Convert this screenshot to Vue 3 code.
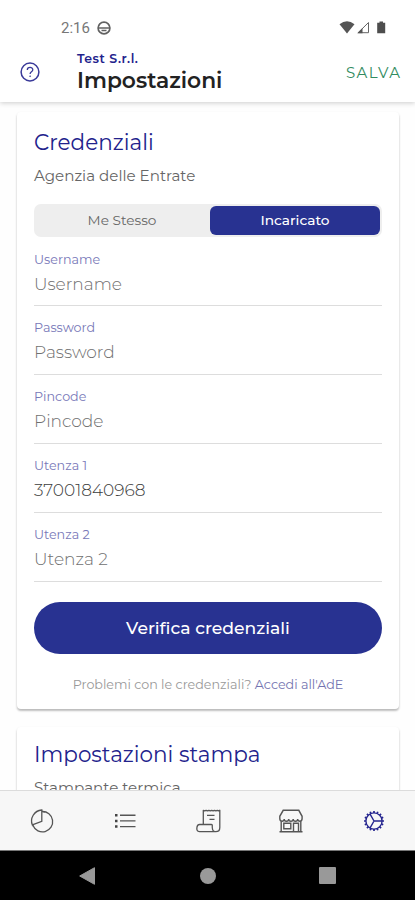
<script setup>
const fields = [
  { label: 'Username', text: 'Username' },
  { label: 'Password', text: 'Password' },
  { label: 'Pincode', text: 'Pincode' },
  { label: 'Utenza 1', text: '37001840968', filled: true },
  { label: 'Utenza 2', text: 'Utenza 2' },
]
// Angles of the teeth around the gear rim
const teeth = Array.from({ length: 16 }, (_, i) => i * 22.5)
</script>

<template>
  <div class="screen">
    <header class="header">
      <div class="status">
        <span class="time">2:16</span>
        <svg class="wheel" width="14" height="14" viewBox="0 0 14 14" fill="none" stroke="#616161" stroke-width="1.7">
          <circle cx="7" cy="7" r="5.9" />
          <path d="M1 7h12M4.500 9.500h5" stroke-width="1.300" />
        </svg>
        <svg class="signals" width="48" height="16" viewBox="0 0 48 16">
          <path d="M.5 4.200Q8 -1.500 15.500 4.200L8 13.500z" fill="#555" />
          <path d="M19.200 12.700L29.500 2.500V12.700z" fill="none" stroke="#666" stroke-width="1" />
          <path d="M18.200 13.200L23.500 8V13.200z" fill="#555" />
          <path d="M40.500 1.400h3.500v1.300h2.200v10.600h-8V2.700h2.300z" fill="#4d4d4d" />
        </svg>
      </div>
      <div class="bar">
        <svg class="help" width="20" height="20" viewBox="0 0 20 20" fill="none" stroke="#3a3a99">
          <circle cx="10" cy="10" r="8.900" stroke-width="1.500" />
          <path d="M7.300 7.900c0-3.400 5.500-3.300 5.500-.2 0 2-2.700 2-2.700 4.200" stroke-width="1.300" />
          <circle cx="10.100" cy="14.200" r=".5" fill="#3a3a99" stroke-width=".6" />
        </svg>
        <div class="titles">
          <div class="company">Test S.r.l.</div>
          <h1>Impostazioni</h1>
        </div>
        <span class="save">SALVA</span>
      </div>
    </header>

    <main class="content">
      <section class="card">
        <h2>Credenziali</h2>
        <p class="sub">Agenzia delle Entrate</p>
        <div class="segment">
          <span class="option">Me Stesso</span>
          <span class="option active">Incaricato</span>
        </div>
        <div v-for="f in fields" :key="f.label" class="field">
          <div class="label">{{ f.label }}</div>
          <div class="value" :class="{ filled: f.filled }">{{ f.text }}</div>
        </div>
        <div class="verify">Verifica credenziali</div>
        <p class="hint">Problemi con le credenziali? <span>Accedi all'AdE</span></p>
      </section>
      <section class="card second">
        <h2>Impostazioni stampa</h2>
        <p class="sub">Stampante termica</p>
      </section>
    </main>

    <nav class="tabs">
      <div class="tab">
        <svg width="26" height="26" viewBox="0 0 26 26" fill="none" stroke="#555" stroke-width="1.300">
          <path d="M13 3.500a10.200 10.200 0 1 1-9 14" />
          <path d="M12.800 2v11.300L3.300 16.800C.8 10.500 5 2.500 12.800 2z" />
          <path d="M13 3.400c1 0 2 .1 3 .4M3.500 16.500l1 2" />
        </svg>
      </div>
      <div class="tab">
        <svg width="26" height="26" viewBox="0 0 26 26" stroke="#555" stroke-width="1.400">
          <path d="M8 7.200h15.500M8 12.900h15.500M8 18.600h15.500" />
          <path d="M3 7.200h2.500M3 12.900h2.500M3 18.600h2.500" stroke-width="2.500" stroke="#444" />
        </svg>
      </div>
      <div class="tab">
        <svg width="26" height="26" viewBox="0 0 26 26" fill="none" stroke="#555" stroke-width="1.300" stroke-linejoin="round">
          <path d="M8.300 16.500V2.300l1.400.6 1.400-.6 1.400.6 1.400-.6 1.400.6 1.400-.6 1.400.6 1.400-.6 1.400.6 1.400-.6 1.300.6 1.200-.6V19.500c0 2.700-1.500 4.200-4 4.200H4.500c-2.500 0-3-2.200-2.500-4.700.3-1.500 1-2.500 2.500-2.500h11.800c1.500 0 .8 1.700 1 3.200.2 2.200 1 3.800 2.700 4" />
          <path d="M12 7.300h7.500M14.500 11.300h5" />
        </svg>
      </div>
      <div class="tab">
        <svg width="26" height="26" viewBox="0 0 26 26" fill="none" stroke="#555" stroke-width="1.400">
          <path d="M5.200 2.300h15.600l3.300 6v2.200c0 3.500-4.400 3.500-4.400.4 0 3.100-4.500 3.100-4.500 0 0 3.100-4.500 3.100-4.500 0 0 3.100-4.500 3.100-4.500 0 0 3.100-4.400 3.100-4.400-.4V8.300z" />
          <path d="M3.200 13v10.200M22.800 13v10.200M1.500 23.800h23M5.800 15.200h7v5.500h-7zM15.500 23.500v-8.300h5v8.300" />
        </svg>
      </div>
      <div class="tab">
        <svg width="26" height="26" viewBox="0 0 26 26" fill="none" stroke="#25258f" stroke-width="1.400">
          <circle cx="13" cy="13" r="8.100" />
          <path d="M13 13h8M13 13L9.100 6.200M13 13L9.100 19.800" />
          <path v-for="a in teeth" :key="a" d="M13 4.900V3" stroke-width="1.700" :transform="`rotate(${a} 13 13)`" />
        </svg>
      </div>
    </nav>

    <footer class="system">
      <svg width="18" height="20" viewBox="0 0 18 20"><path d="M1.700 10L16.500 1.700V18.300z" fill="#999" stroke="#999" stroke-linejoin="round" /></svg>
      <span class="home"></span>
      <span class="recent"></span>
    </footer>
  </div>
</template>

<style>
body { margin: 0; background: #fff; }
</style>

<style scoped>
* { box-sizing: border-box; }
h1, h2, p { margin: 0; }
.screen {
  width: 415px; height: 900px; overflow: hidden;
  display: flex; flex-direction: column;
  background: #fefefe;
  font-family: Montserrat, Inter, sans-serif;
  white-space: nowrap;
}
.header {
  position: relative; z-index: 1;
  flex: none; height: 102px; background: #fff;
  box-shadow: 0 1px 5px rgba(0, 0, 0, .2);
}
.status { display: flex; align-items: center; height: 44px; padding: 12px 28px 0 61px; }
.time { font: 400 15px/20px Roboto, sans-serif; color: #777; }
.wheel { margin-left: 7px; }
.signals { margin-left: auto; }
.bar { display: flex; align-items: flex-start; padding: 8px 15px 0 20px; }
.help { margin-top: 10px; }
.titles { margin-left: 37px; }
.company { font-size: 12.500px; line-height: 14px; font-weight: 600; color: #22228c; letter-spacing: .5px; }
h1 { font-size: 21.800px; line-height: 26px; margin-top: 1px; font-weight: 600; color: #222; }
.save { margin: 12px 0 0 auto; font-size: 15px; line-height: 18px; color: #328b60; letter-spacing: 1.300px; margin-right: -1.300px; }
.content { flex: 1; min-height: 0; overflow: hidden; padding: 10px 16px 0 17px; }
.card {
  height: 597px; padding: 16px 17px 0; background: #fff;
  border-radius: 4px; box-shadow: 0 2px 2px rgba(0, 0, 0, .22), 0 1px 3px rgba(0, 0, 0, .08);
}
.second { margin-top: 18px; padding-top: 13px; }
h2 { font-size: 21.500px; line-height: 28px; font-weight: 400; color: #22228c; }
.sub { margin-top: 10px; font-size: 15.100px; line-height: 20px; color: #666; }
.segment {
  display: flex; height: 33px; margin-top: 18px; padding: 2px;
  border-radius: 7px; background: #eee;
}
.option { flex: 1; display: grid; place-items: center; padding: 0 2px 1px 0; font-size: 13.700px; color: #666; }
.option.active { flex: none; width: 170px; padding-right: 0; border-radius: 6px; background: #283291; color: #fff; font-weight: 500; }
.field { height: 69px; padding-top: 13px; border-bottom: 1px solid #ddd; }
.segment + .field { padding-top: 14px; }
.segment + .field .value { margin-top: 5px; }
.label { font-size: 12.700px; line-height: 17px; color: #7878b8; }
.value { margin-top: 5px; font-size: 17px; line-height: 22px; font-weight: 300; color: #707070; }
.value.filled { color: #3c3c3c; }
.verify {
  display: grid; place-items: center; height: 52px; margin-top: 20px; padding-bottom: 1px;
  border-radius: 26px; background: #283291;
  color: #fff; font-size: 17.200px; font-weight: 500;
}
.hint { margin-top: 22px; text-align: center; font-size: 12.700px; line-height: 18px; color: #999; }
.hint span { color: #7373b0; }
.tabs {
  flex: none; height: 60px; display: grid; grid-template-columns: repeat(5, 1fr);
  background: #f7f7f7; border-top: 1px solid #dcdcdc;
}
.tab { display: grid; place-items: center; }
.system {
  flex: none; height: 50px; display: flex; align-items: center; justify-content: space-between;
  padding: 0 79px 0 78px; background: #000; border-top: 1px solid #777;
}
.home { width: 16px; height: 16px; border-radius: 50%; background: #999; }
.recent { width: 17px; height: 17px; border-radius: 1px; background: #999; }
</style>
